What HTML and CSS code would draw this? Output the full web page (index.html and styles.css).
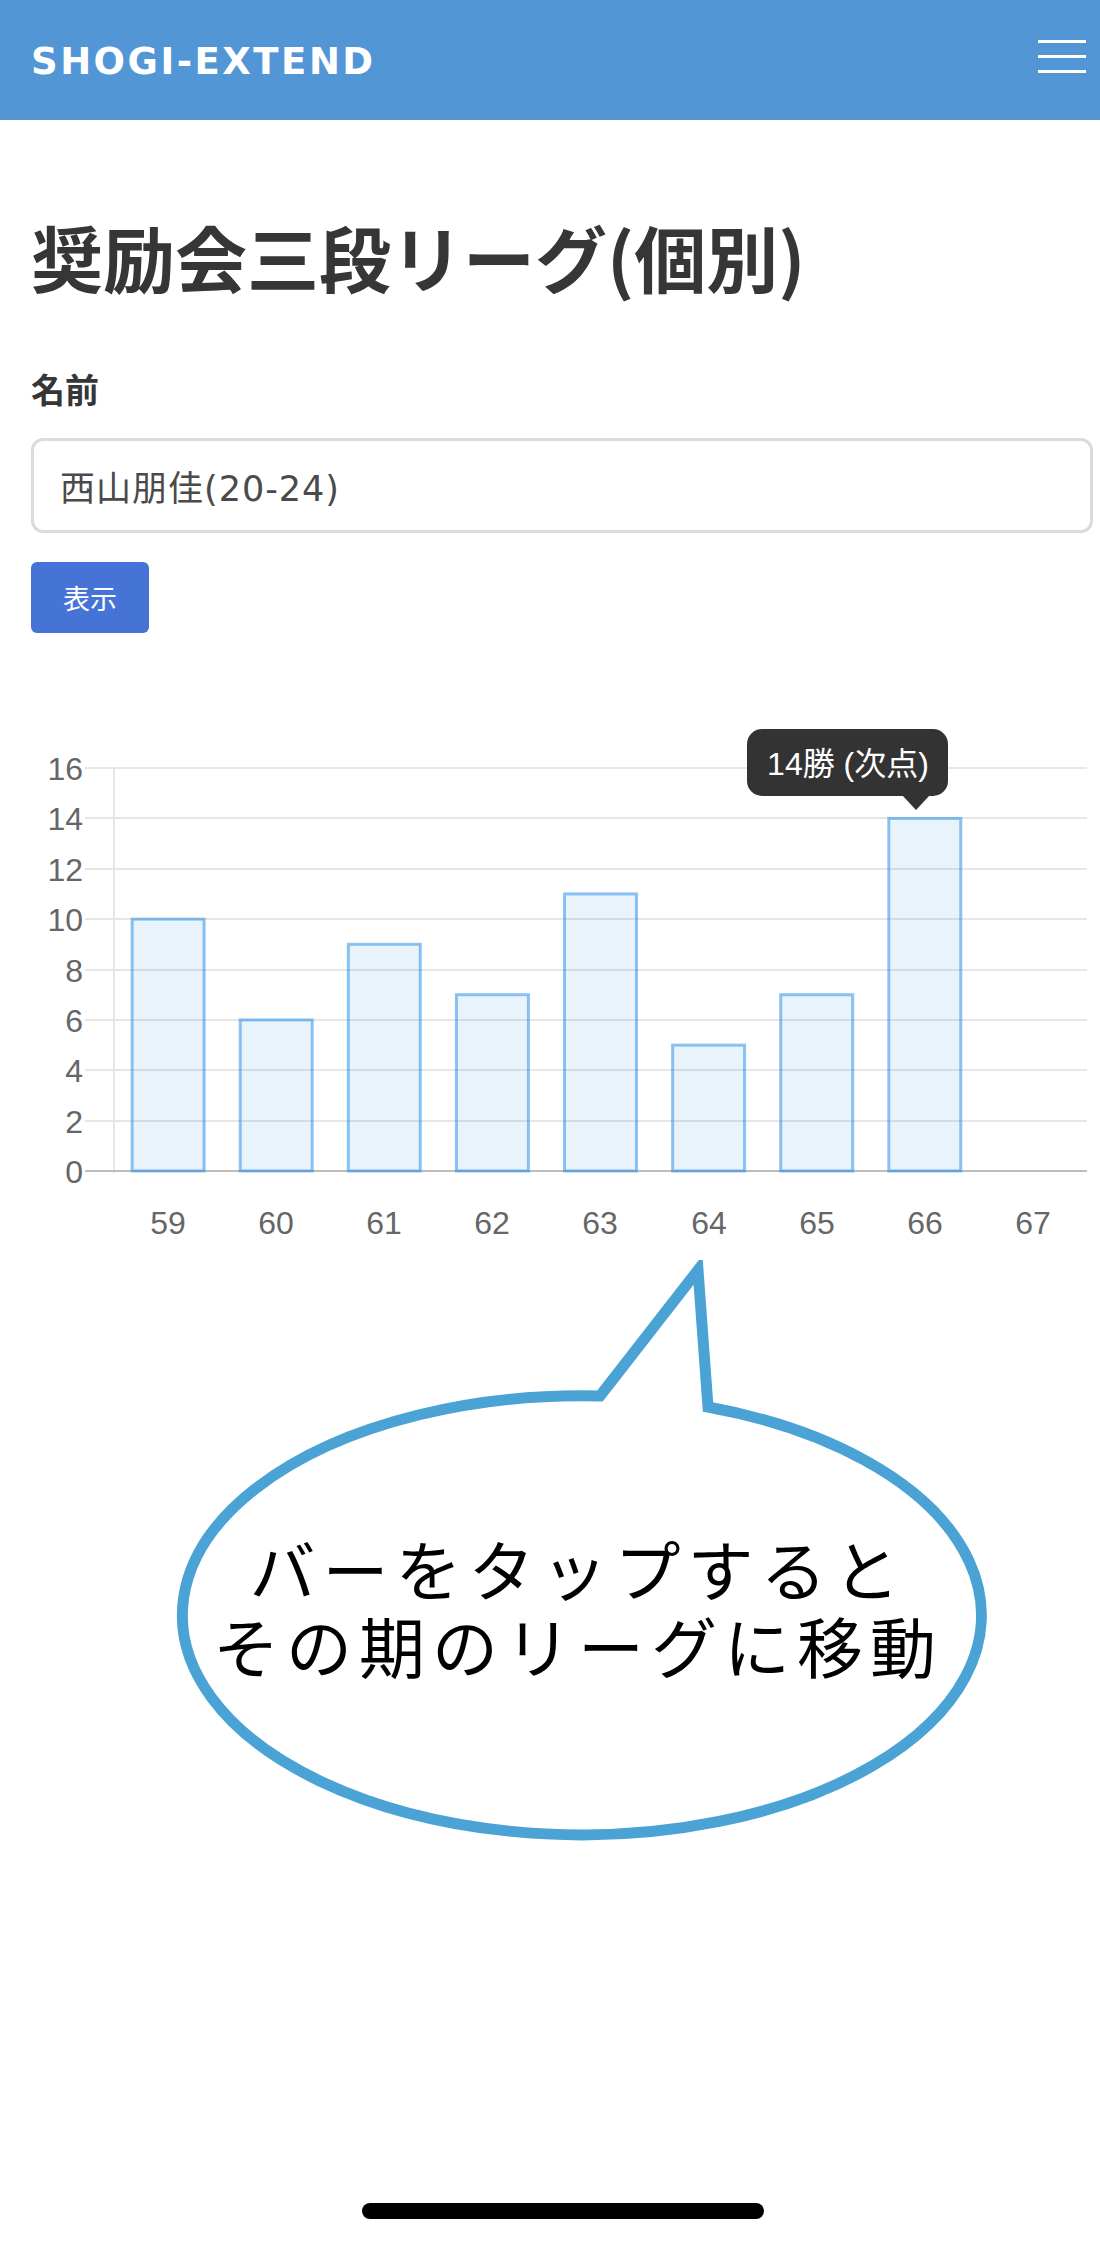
FILE: index.html
```html
<!DOCTYPE html>
<html lang="ja">
<head>
<meta charset="utf-8">
<title>奨励会三段リーグ(個別)</title>
<link rel="stylesheet" href="styles.css">
</head>
<body>
<header class="navbar">
  <div class="brand">SHOGI-EXTEND</div>
  <div class="burger"><span></span><span></span><span></span></div>
</header>
<main class="main">
  <h1 class="title">奨励会三段リーグ(個別)</h1>
  <label class="label">名前</label>
  <div class="input">西山朋佳(20-24)</div>
  <button class="button">表示</button>

  <svg class="chart" width="1100" height="560" viewBox="0 700 1100 560" xmlns="http://www.w3.org/2000/svg">
    <g class="grid">
      <line x1="85" y1="768" x2="1087" y2="768"/>
      <line x1="85" y1="818" x2="1087" y2="818"/>
      <line x1="85" y1="869" x2="1087" y2="869"/>
      <line x1="85" y1="919" x2="1087" y2="919"/>
      <line x1="85" y1="970" x2="1087" y2="970"/>
      <line x1="85" y1="1020" x2="1087" y2="1020"/>
      <line x1="85" y1="1070" x2="1087" y2="1070"/>
      <line x1="85" y1="1121" x2="1087" y2="1121"/>
      <line x1="114" y1="768" x2="114" y2="1173"/>
    </g>
    <line class="zero" x1="85" y1="1171" x2="1087" y2="1171"/>
    <g class="ylabels">
      <text x="83" y="779.5">16</text>
      <text x="83" y="829.5">14</text>
      <text x="83" y="880.5">12</text>
      <text x="83" y="930.5">10</text>
      <text x="83" y="981.5">8</text>
      <text x="83" y="1031.5">6</text>
      <text x="83" y="1081.5">4</text>
      <text x="83" y="1132.5">2</text>
      <text x="83" y="1182.5">0</text>
    </g>
    <g class="bars">
      <rect x="132.1" y="919.1" width="72" height="251.9"/>
      <rect x="240.2" y="1019.9" width="72" height="151.1"/>
      <rect x="348.3" y="944.3" width="72" height="226.7"/>
      <rect x="456.4" y="994.7" width="72" height="176.3"/>
      <rect x="564.5" y="893.9" width="72" height="277.1"/>
      <rect x="672.6" y="1045.1" width="72" height="125.9"/>
      <rect x="780.7" y="994.7" width="72" height="176.3"/>
      <rect x="888.8" y="818.4" width="72" height="352.6"/>
    </g>
    <g class="xlabels">
      <text x="168" y="1234">59</text>
      <text x="276" y="1234">60</text>
      <text x="384" y="1234">61</text>
      <text x="492" y="1234">62</text>
      <text x="600" y="1234">63</text>
      <text x="709" y="1234">64</text>
      <text x="817" y="1234">65</text>
      <text x="925" y="1234">66</text>
      <text x="1033" y="1234">67</text>
    </g>
    <g class="tooltip">
      <rect x="747" y="729" width="201" height="67" rx="15"/>
      <polygon points="902,795 930,795 916,810"/>
      <text x="848" y="775">14勝 (次点)</text>
    </g>
  </svg>

  <svg class="bubble" width="1100" height="600" viewBox="0 1260 1100 600" xmlns="http://www.w3.org/2000/svg">
    <path class="balloon" d="M 600 1396 L 698 1270 L 708 1407 A 399.5 219.5 0 1 1 600 1396 Z"/>
    <text class="note" x="578" y="1596">バーをタップすると</text>
    <text class="note" x="578" y="1673">その期のリーグに移動</text>
  </svg>
</main>
<div class="home-indicator"></div>
</body>
</html>
```
FILE: styles.css
```css
html, body {
  margin: 0;
  padding: 0;
  background: #ffffff;
}
body {
  position: relative;
  min-height: 2243px;
  font-family: "Noto Sans CJK JP", "Liberation Sans", sans-serif;
  color: #363636;
}
.navbar {
  height: 120px;
  background: #5296d6;
  display: flex;
  align-items: center;
  justify-content: space-between;
  padding: 0 14px 0 31px;
  box-sizing: border-box;
}
.brand {
  font-family: "DejaVu Sans", "Liberation Sans", sans-serif;
  font-weight: 700;
  font-size: 37px;
  letter-spacing: 2.5px;
  color: #ffffff;
  line-height: 1;
  margin-top: 2px;
}
.burger {
  width: 48px;
  height: 33px;
  display: flex;
  flex-direction: column;
  justify-content: space-between;
  margin-bottom: 7px;
}
.burger span {
  display: block;
  height: 3px;
  background: #ffffff;
}
.main {
  padding: 0 7px 0 31px;
  display: flex;
  flex-direction: column;
  align-items: flex-start;
}
.title {
  margin: 93px 0 0 0;
  font-size: 72px;
  line-height: 86px;
  font-weight: 700;
  color: #363636;
  white-space: nowrap;
}
.label {
  margin-top: 69px;
  font-size: 34px;
  line-height: 41px;
  font-weight: 700;
  color: #363636;
}
.input {
  margin-top: 29px;
  box-sizing: border-box;
  width: 1062px;
  height: 95px;
  border: 3px solid #dbdbdb;
  border-radius: 12px;
  padding-left: 26px;
  display: flex;
  align-items: center;
  font-family: "DejaVu Sans", "Noto Sans CJK JP", sans-serif;
  font-size: 35px;
  letter-spacing: 1px;
  color: #4a4a4a;
  font-weight: 400;
}
.button {
  margin-top: 29px;
  width: 118px;
  height: 71px;
  border: none;
  border-radius: 6px;
  background: #4674d6;
  color: #ffffff;
  font-family: "Noto Sans CJK JP", sans-serif;
  font-size: 27px;
  padding: 0;
}
.chart {
  display: block;
  margin-top: 67px;
  margin-left: -31px;
}
.chart .grid line {
  stroke: #e6e6e6;
  stroke-width: 2;
}
.chart .zero {
  stroke: #bdbdbd;
  stroke-width: 2;
}
.chart text {
  font-family: "Liberation Sans", "Noto Sans CJK JP", sans-serif;
  font-size: 32px;
  fill: #666666;
}
.ylabels text {
  text-anchor: end;
}
.xlabels text {
  text-anchor: middle;
}
.bars rect {
  fill: rgba(30, 136, 229, 0.1);
  stroke: rgba(30, 136, 229, 0.5);
  stroke-width: 3;
}
.tooltip rect, .tooltip polygon {
  fill: #333333;
}
.chart .tooltip text {
  fill: #ffffff;
  text-anchor: middle;
  font-size: 32px;
}
.bubble {
  display: block;
  margin-left: -31px;
}
.balloon {
  fill: #ffffff;
  stroke: #4ba3d5;
  stroke-width: 11;
  stroke-linejoin: miter;
  stroke-miterlimit: 10;
}
.note {
  font-family: "Noto Sans CJK JP", sans-serif;
  font-size: 66px;
  letter-spacing: 7px;
  fill: #000000;
  text-anchor: middle;
}
.home-indicator {
  position: absolute;
  left: 362px;
  bottom: 24px;
  width: 402px;
  height: 16px;
  border-radius: 8px;
  background: #000000;
}
```
